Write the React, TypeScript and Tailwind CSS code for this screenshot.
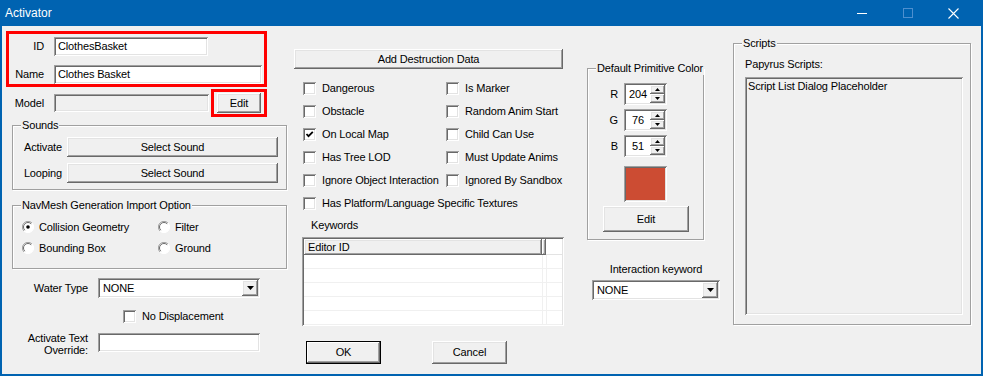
import React from "react";

const RAISED =
  "bg-[#f0f0f0] shadow-[inset_-1px_-1px_0_#696969,inset_1px_1px_0_#fff,inset_-2px_-2px_0_#a0a0a0,inset_2px_2px_0_#e3e3e3]";
const DEFAULT_BTN =
  "bg-[#f0f0f0] shadow-[inset_0_0_0_1px_#000,inset_-2px_-2px_0_#696969,inset_2px_2px_0_#fff,inset_-3px_-3px_0_#a0a0a0]";
const SUNKEN =
  "shadow-[inset_1px_1px_0_#a0a0a0,inset_-1px_-1px_0_#fff,inset_2px_2px_0_#696969,inset_-2px_-2px_0_#e3e3e3]";

function Button({
  className,
  children,
  isDefault,
}: {
  className: string;
  children: React.ReactNode;
  isDefault?: boolean;
}) {
  return (
    <div
      className={`flex items-center justify-center ${isDefault ? DEFAULT_BTN : RAISED} ${className}`}
    >
      {children}
    </div>
  );
}

function Edit({
  className,
  value,
  disabled,
}: {
  className: string;
  value?: string;
  disabled?: boolean;
}) {
  return (
    <div
      className={`flex items-center pl-[4px] ${disabled ? "bg-[#f0f0f0]" : "bg-white"} ${SUNKEN} ${className}`}
    >
      {value}
    </div>
  );
}

function GroupBox({
  label,
  className,
  children,
}: {
  label: string;
  className: string;
  children?: React.ReactNode;
}) {
  return (
    <div
      className={`relative border border-[#a0a0a0] shadow-[inset_1px_1px_0_#fff,1px_1px_0_#fff] ${className}`}
    >
      <span className="absolute -top-[8px] left-[8px] whitespace-nowrap bg-[#f0f0f0] px-[1px] leading-[14px]">
        {label}
      </span>
      {children}
    </div>
  );
}

function Check({ label, checked }: { label?: string; checked?: boolean }) {
  return (
    <div className="flex items-center">
      <div className={`h-[13px] w-[13px] shrink-0 bg-white ${SUNKEN} flex items-center justify-center`}>
        {checked && (
          <svg width="9" height="9" viewBox="0 0 9 9">
            <path d="M1.5 4 L3.5 6.2 L7.8 1.8" fill="none" stroke="#000" strokeWidth="1.8" />
          </svg>
        )}
      </div>
      {label && <span className="ml-[6px] whitespace-nowrap">{label}</span>}
    </div>
  );
}

function Radio({ label, checked }: { label: string; checked?: boolean }) {
  return (
    <div className="flex items-center">
      <svg width="12" height="12" viewBox="0 0 12 12" className="shrink-0">
        <circle cx="6" cy="6" r="5.5" fill="#fff" />
        <path d="M10 2 A5.5 5.5 0 0 0 2 10" fill="none" stroke="#a0a0a0" strokeWidth="1" />
        <path d="M9.2 2.8 A4.5 4.5 0 0 0 2.8 9.2" fill="none" stroke="#696969" strokeWidth="1" />
        <path d="M2 10 A5.5 5.5 0 0 0 10 2" fill="none" stroke="#fff" strokeWidth="1" />
        {checked && <circle cx="6" cy="6" r="1.8" fill="#000" />}
      </svg>
      <span className="ml-[5px] whitespace-nowrap">{label}</span>
    </div>
  );
}

function Arrow() {
  return (
    <svg width="7" height="4" viewBox="0 0 7 4">
      <path d="M0 0 H7 L3.5 4 Z" fill="#000" />
    </svg>
  );
}

function Combo({ className, value }: { className: string; value: string }) {
  return (
    <div className={`flex items-center bg-white p-[2px] ${SUNKEN} ${className}`}>
      <span className="flex-1 pl-[3px]">{value}</span>
      <div className={`flex h-full w-[16px] items-center justify-center ${RAISED}`}>
        <Arrow />
      </div>
    </div>
  );
}

function Spin({ label, value }: { label: string; value: string }) {
  return (
    <div className="flex h-[22px] items-center">
      <span className="w-[30px] text-right">{label}</span>
      <div className={`ml-[6px] flex h-[22px] w-[43px] items-stretch bg-white p-[2px] ${SUNKEN}`}>
        <span className="flex flex-1 items-center justify-center">{value}</span>
        <div className="flex w-[15px] flex-col">
          <div className={`flex flex-1 items-center justify-center ${RAISED}`}>
            <svg width="5" height="3" viewBox="0 0 5 3">
              <path d="M0 3 H5 L2.5 0 Z" fill="#000" />
            </svg>
          </div>
          <div className={`flex flex-1 items-center justify-center ${RAISED}`}>
            <svg width="5" height="3" viewBox="0 0 5 3">
              <path d="M0 0 H5 L2.5 3 Z" fill="#000" />
            </svg>
          </div>
        </div>
      </div>
    </div>
  );
}

const FLAGS: [string, boolean, string][] = [
  ["Dangerous", false, "Is Marker"],
  ["Obstacle", false, "Random Anim Start"],
  ["On Local Map", true, "Child Can Use"],
  ["Has Tree LOD", false, "Must Update Anims"],
  ["Ignore Object Interaction", false, "Ignored By Sandbox"],
];

export default function App() {
  return (
    <div
      className="h-[376px] w-[983px] overflow-hidden bg-[#0063b1] text-[11px] leading-[13px] tracking-[-0.15px] text-black"
      style={{ fontFamily: '"Liberation Sans", Arial, sans-serif' }}
    >
      {/* Title bar */}
      <div className="flex h-[26px] items-center text-white">
        <span className="ml-[5px] text-[12px] tracking-normal">Activator</span>
        <div className="ml-auto flex items-center">
          <svg width="46" height="26" viewBox="0 0 46 26">
            <path d="M18 13.5 H28" stroke="#fff" strokeWidth="1" />
          </svg>
          <svg width="46" height="26" viewBox="0 0 46 26">
            <rect x="18.5" y="8.5" width="9" height="9" fill="none" stroke="#4d8fcf" strokeWidth="1" />
          </svg>
          <svg width="46" height="26" viewBox="0 0 46 26" className="mr-[6px]">
            <path d="M17.5 8.5 L27.5 18.5 M27.5 8.5 L17.5 18.5" stroke="#fff" strokeWidth="1.1" />
          </svg>
        </div>
      </div>

      {/* Client area */}
      <div className="mx-[2px] flex h-[348px] items-start bg-[#f0f0f0]">
        {/* Left column */}
        <div className="ml-[4px] flex w-[281px] flex-col">
          <div className="mt-[5px] flex h-[56px] w-[261px] flex-col gap-[9px] border-[3px] border-[#ff0000] pt-[3px]">
            <div className="flex h-[19px] items-center">
              <span className="w-[35px] text-right">ID</span>
              <Edit className="ml-[10px] h-[19px] w-[154px]" value="ClothesBasket" />
            </div>
            <div className="flex h-[19px] items-center">
              <span className="w-[35px] text-right">Name</span>
              <Edit className="ml-[10px] h-[19px] w-[208px]" value="Clothes Basket" />
            </div>
          </div>
          <div className="mt-[2px] flex h-[28px] items-center">
            <span className="w-[38px] text-right">Model</span>
            <Edit className="ml-[10px] h-[18px] w-[155px]" disabled />
            <div className="ml-[2px] flex h-[28px] w-[56px] items-center border-[3px] border-[#ff0000] pl-[3px]">
              <Button className="h-[20px] w-[44px]">Edit</Button>
            </div>
          </div>

          <GroupBox label="Sounds" className="ml-[6px] mt-[8px] h-[65px] w-[275px]">
            <div className="flex flex-col gap-[6px] pt-[11px]">
              <div className="flex items-center">
                <span className="w-[49px] text-right">Activate</span>
                <Button className="ml-[5px] h-[20px] w-[211px]">Select Sound</Button>
              </div>
              <div className="flex items-center">
                <span className="w-[49px] text-right">Looping</span>
                <Button className="ml-[5px] h-[20px] w-[211px]">Select Sound</Button>
              </div>
            </div>
          </GroupBox>

          <GroupBox label="NavMesh Generation Import Option" className="ml-[6px] mt-[15px] h-[64px] w-[275px]">
            <div className="grid grid-cols-[136px_1fr] gap-y-[7px] pl-[9px] pt-[14px]">
              <div className="flex h-[14px] items-center">
                <Radio label="Collision Geometry" checked />
              </div>
              <div className="flex h-[14px] items-center">
                <Radio label="Filter" />
              </div>
              <div className="flex h-[14px] items-center">
                <Radio label="Bounding Box" />
              </div>
              <div className="flex h-[14px] items-center">
                <Radio label="Ground" />
              </div>
            </div>
          </GroupBox>

          <div className="mt-[9px] flex h-[20px] items-center">
            <span className="w-[82px] text-right">Water Type</span>
            <Combo className="ml-[10px] h-[20px] w-[162px]" value="NONE" />
          </div>
          <div className="ml-[117px] mt-[12px] flex h-[13px] items-center">
            <Check label="No Displacement" />
          </div>
          <div className="mt-[10px] flex items-start">
            <span className="-mt-[1px] w-[82px] text-right leading-[12px]">
              Activate Text
              <br />
              Override:
            </span>
            <Edit className="ml-[10px] h-[19px] w-[162px]" />
          </div>
        </div>

        {/* Middle column */}
        <div className="ml-[7px] flex w-[270px] flex-col">
          <Button className="mt-[23px] h-[20px] w-[269px]">Add Destruction Data</Button>
          <div className="mt-[8px] grid grid-cols-[143px_1fr] pl-[9px]">
            {FLAGS.map(([a, checked, b]) => (
              <React.Fragment key={a}>
                <div className="flex h-[23px] items-center">
                  <Check label={a} checked={checked} />
                </div>
                <div className="flex h-[23px] items-center">
                  <Check label={b} />
                </div>
              </React.Fragment>
            ))}
            <div className="col-span-2 flex h-[23px] items-center">
              <Check label="Has Platform/Language Specific Textures" />
            </div>
          </div>
          <span className="ml-[17px] mt-[4px]">Keywords</span>
          <div className={`ml-[8px] mt-[5px] h-[89px] w-[262px] bg-white p-[2px] ${SUNKEN}`}>
            <div className="flex h-[16px]">
              <div className={`flex w-[238px] items-center pl-[4px] ${RAISED}`}>Editor ID</div>
              <div className={`w-[4px] ${RAISED}`} />
              <div className="flex-1 border-b border-[#e3e3e3]" />
            </div>
            {[0, 1, 2, 3, 4].map((i) => (
              <div key={i} className="flex h-[14px] border-b border-[#f0f0f0]">
                <div className="w-[239px] border-r border-[#f0f0f0]" />
                <div className="w-[4px] border-r border-[#f0f0f0]" />
              </div>
            ))}
          </div>
          <div className="mt-[15px] flex">
            <Button isDefault className="ml-[12px] h-[23px] w-[75px]">
              OK
            </Button>
            <Button className="ml-[51px] h-[23px] w-[75px]">Cancel</Button>
          </div>
        </div>

        {/* Colour column */}
        <div className="ml-[23px] flex w-[133px] flex-col">
          <GroupBox label="Default Primitive Color" className="mt-[42px] h-[172px] w-[117px]">
            <div className="flex flex-col gap-[4px] pt-[14px]">
              <Spin label="R" value="204" />
              <Spin label="G" value="76" />
              <Spin label="B" value="51" />
            </div>
            <div className={`ml-[36px] mt-[9px] h-[36px] w-[43px] bg-[#cc4c33] p-[2px] ${SUNKEN}`} />
            <Button className="ml-[15px] mt-[4px] h-[26px] w-[86px]">Edit</Button>
          </GroupBox>
          <span className="ml-[5px] mt-[23px] w-[128px] text-center">Interaction keyword</span>
          <Combo className="ml-[5px] mt-[4px] h-[20px] w-[128px]" value="NONE" />
        </div>

        {/* Scripts column */}
        <div className="ml-[13px] flex w-[238px] flex-col">
          <GroupBox label="Scripts" className="mt-[17px] h-[282px] w-[238px]">
            <div className="pl-[11px] pt-[14px]">Papyrus Scripts:</div>
            <div className={`ml-[11px] mt-[6px] h-[238px] w-[218px] bg-[#f0f0f0] pl-[3px] pt-[3px] ${SUNKEN}`}>
              Script List Dialog Placeholder
            </div>
          </GroupBox>
        </div>
      </div>
    </div>
  );
}
